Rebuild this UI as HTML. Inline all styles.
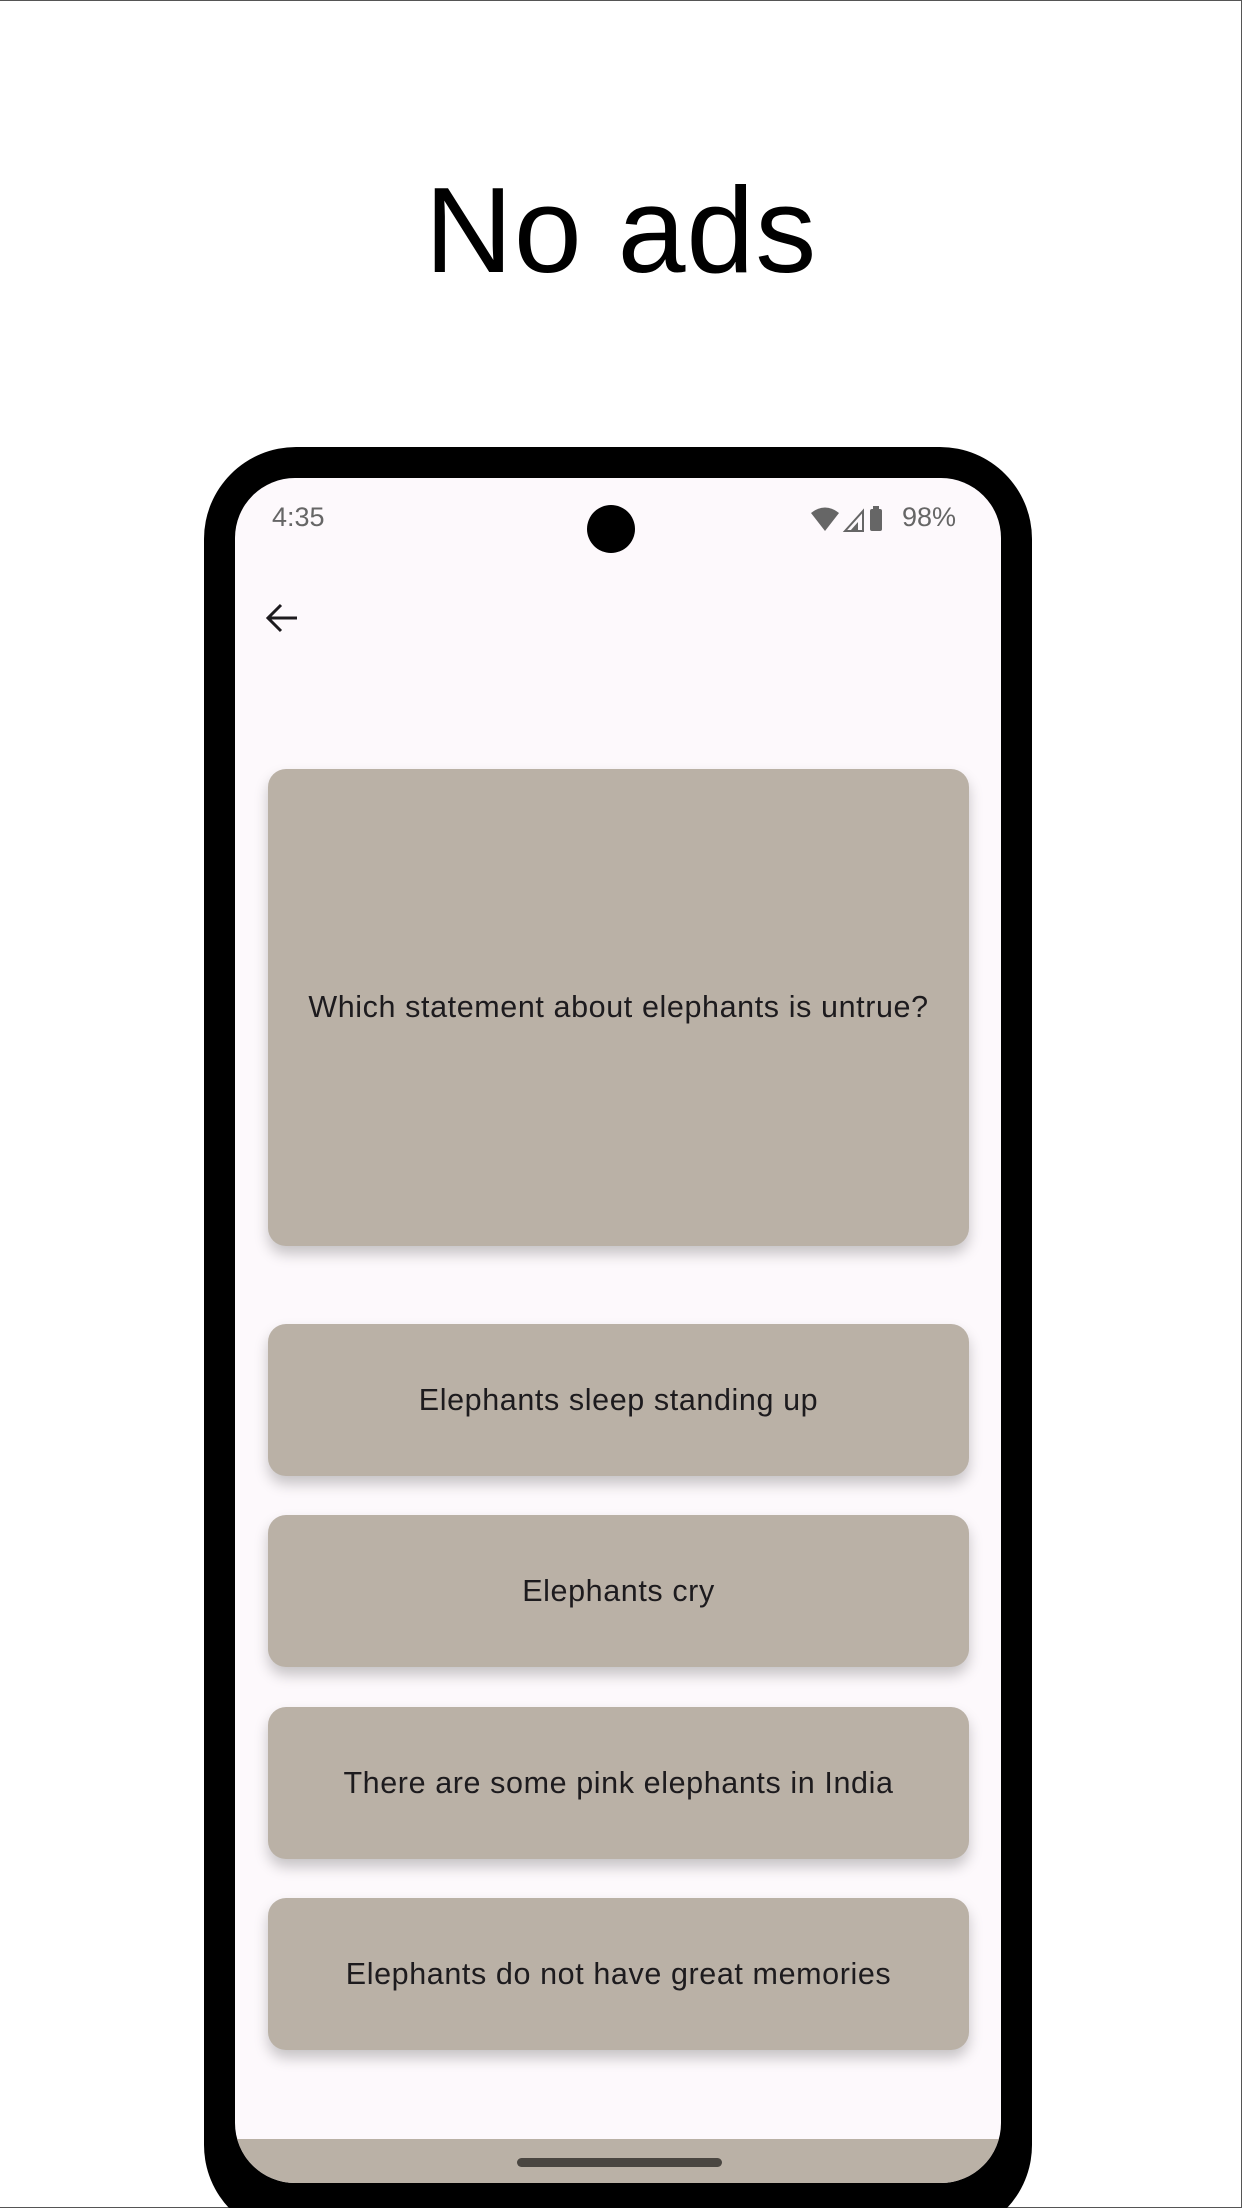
<!DOCTYPE html>
<html><head><meta charset="utf-8">
<style>
*{margin:0;padding:0;box-sizing:border-box}
html,body{width:1242px;height:2208px;overflow:hidden;background:#fff;font-family:"Liberation Sans",sans-serif;position:relative}
.frame{position:absolute;left:0;top:0;width:1242px;height:2208px;border:1px solid #555;border-left:none}
.title{position:absolute;left:0;width:1242px;top:160px;text-align:center;font-size:122px;color:#000;letter-spacing:1px}
.phone{position:absolute;left:204px;top:447px;width:828px;height:1761px;overflow:hidden}
.phone div{width:828px;height:1790px;background:#000;border-radius:92px}
.screen{position:absolute;left:235px;top:478px;width:766px;height:1705px;background:#fdf9fc;border-radius:60px;overflow:hidden}
.cam{position:absolute;left:587px;top:505px;width:48px;height:48px;border-radius:50%;background:#000}
.status{position:absolute;top:502px;font-size:27px;color:#666}
.card{position:absolute;left:268px;width:701px;background:#bab1a6;border-radius:18px;box-shadow:0 8px 14px rgba(0,0,0,0.22);display:flex;align-items:center;justify-content:center;font-size:30.5px;color:#1d1b1e;letter-spacing:0.6px}
.nav{position:absolute;left:0;top:1661px;width:766px;height:44px;background:#bab1a6}
.home{position:absolute;left:282px;top:19px;width:205px;height:9px;border-radius:5px;background:#4a4641}
</style></head><body>
<div class="frame"></div>
<div class="title">No ads</div>
<div class="phone"><div></div></div>
<div class="screen">
  <div class="nav"><div class="home"></div></div>
</div>
<div class="cam"></div>
<div class="status" style="left:272px">4:35</div>
<svg style="position:absolute;left:810px;top:505px" width="90" height="28" viewBox="0 0 90 28">
  <path d="M1 8 Q15 -3 29 8 L15 26 Z" fill="#666"/>
  <path d="M35 26 L53 6 L53 26 Z" fill="none" stroke="#666" stroke-width="2"/>
  <path d="M40 26 L48 17 L48 26 Z" fill="#666"/>
  <rect x="60" y="4" width="12" height="22" rx="2" fill="#666"/>
  <rect x="63" y="1" width="6" height="4" fill="#666"/>
</svg>
<div class="status" style="left:902px">98%</div>
<svg style="position:absolute;left:265px;top:602px" width="34" height="32" viewBox="0 0 34 32">
  <path d="M32 16 H4 M16 3 L3 16 L16 29" fill="none" stroke="#1d1b1e" stroke-width="3"/>
</svg>
<div class="card" style="top:769px;height:477px">Which statement about elephants is untrue?</div>
<div class="card" style="top:1324px;height:152px">Elephants sleep standing up</div>
<div class="card" style="top:1515px;height:152px">Elephants cry</div>
<div class="card" style="top:1707px;height:152px">There are some pink elephants in India</div>
<div class="card" style="top:1898px;height:152px">Elephants do not have great memories</div>
</body></html>
